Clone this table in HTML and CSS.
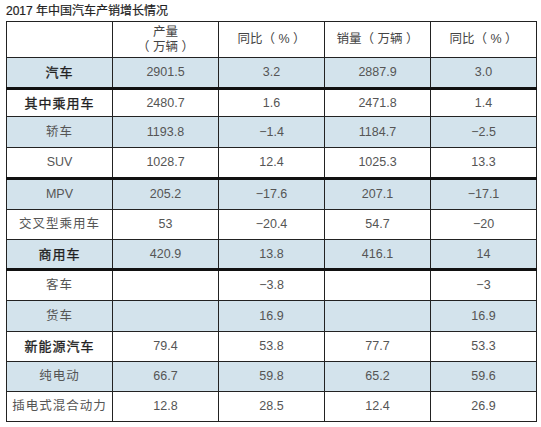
FILE: index.html
```html
<!DOCTYPE html>
<html lang="zh-CN">
<head>
  <meta charset="UTF-8">
  <meta name="viewport" content="width=device-width, initial-scale=1.0">
  <title>2017 年中国汽车产销增长情况</title>
  <link rel="stylesheet" href="styles.css">
</head>
<body>
  <div class="title">2017 年中国汽车产销增长情况</div>
  <table class="sales">
    <colgroup>
      <col class="c1"><col class="c2"><col class="c3"><col class="c4"><col class="c5">
    </colgroup>
    <tr class="head">
      <td></td>
      <td>产量<br>（ 万辆 ）</td>
      <td>同比（ % ）</td>
      <td>销量（ 万辆 ）</td>
      <td>同比（ % ）</td>
    </tr>
    <tr class="blue main thick h31">
      <td>汽车</td><td>2901.5</td><td>3.2</td><td>2887.9</td><td>3.0</td>
    </tr>
    <tr class="main h28">
      <td>其中乘用车</td><td>2480.7</td><td>1.6</td><td>2471.8</td><td>1.4</td>
    </tr>
    <tr class="blue h31">
      <td>轿车</td><td>1193.8</td><td>−1.4</td><td>1184.7</td><td>−2.5</td>
    </tr>
    <tr class="thick latin h31">
      <td>SUV</td><td>1028.7</td><td>12.4</td><td>1025.3</td><td>13.3</td>
    </tr>
    <tr class="blue latin h31">
      <td>MPV</td><td>205.2</td><td>−17.6</td><td>207.1</td><td>−17.1</td>
    </tr>
    <tr class="h30">
      <td>交叉型乘用车</td><td>53</td><td>−20.4</td><td>54.7</td><td>−20</td>
    </tr>
    <tr class="blue main thick h30">
      <td>商用车</td><td>420.9</td><td>13.8</td><td>416.1</td><td>14</td>
    </tr>
    <tr class="h31">
      <td>客车</td><td></td><td>−3.8</td><td></td><td>−3</td>
    </tr>
    <tr class="blue h31">
      <td>货车</td><td></td><td>16.9</td><td></td><td>16.9</td>
    </tr>
    <tr class="main h30">
      <td>新能源汽车</td><td>79.4</td><td>53.8</td><td>77.7</td><td>53.3</td>
    </tr>
    <tr class="blue h30">
      <td>纯电动</td><td>66.7</td><td>59.8</td><td>65.2</td><td>59.6</td>
    </tr>
    <tr class="h30">
      <td>插电式混合动力</td><td>12.8</td><td>28.5</td><td>12.4</td><td>26.9</td>
    </tr>
  </table>
</body>
</html>
```

FILE: styles.css
```css
body {
  margin: 0;
  background: #fff;
  font-family: "Liberation Sans", "Noto Sans CJK SC", sans-serif;
  color: #555;
}

.title {
  padding: 4px 0 0 6px;
  height: 17px;
  font-size: 12px;
  line-height: 14px;
  color: #222;
  -webkit-text-stroke: 0.2px #222;
}

.sales {
  margin-left: 6px;
  width: 531px;
  table-layout: fixed;
  border-collapse: collapse;
}

.c1, .c2, .c3, .c4 {
  width: 106px;
}

.sales td {
  border: 1px solid #222;
  padding: 0;
  text-align: center;
  font-size: 12.5px;
  line-height: 15px;
  color: #555;
}

.sales td:first-child {
  letter-spacing: 1px;
}

.sales .latin td:first-child {
  letter-spacing: 0;
}

.head {
  height: 36px;
}

.head td {
  font-size: 12.5px;
  color: #444;
}

.h28 { height: 28px; }
.h30 { height: 30px; }
.h31 { height: 31px; }

.blue td {
  background: #d3e3ec;
}

.main td:first-child {
  color: #222;
  font-size: 13px;
  -webkit-text-stroke: 0.3px #222;
}

.thick td {
  border-bottom: 3px solid #111;
}
```
